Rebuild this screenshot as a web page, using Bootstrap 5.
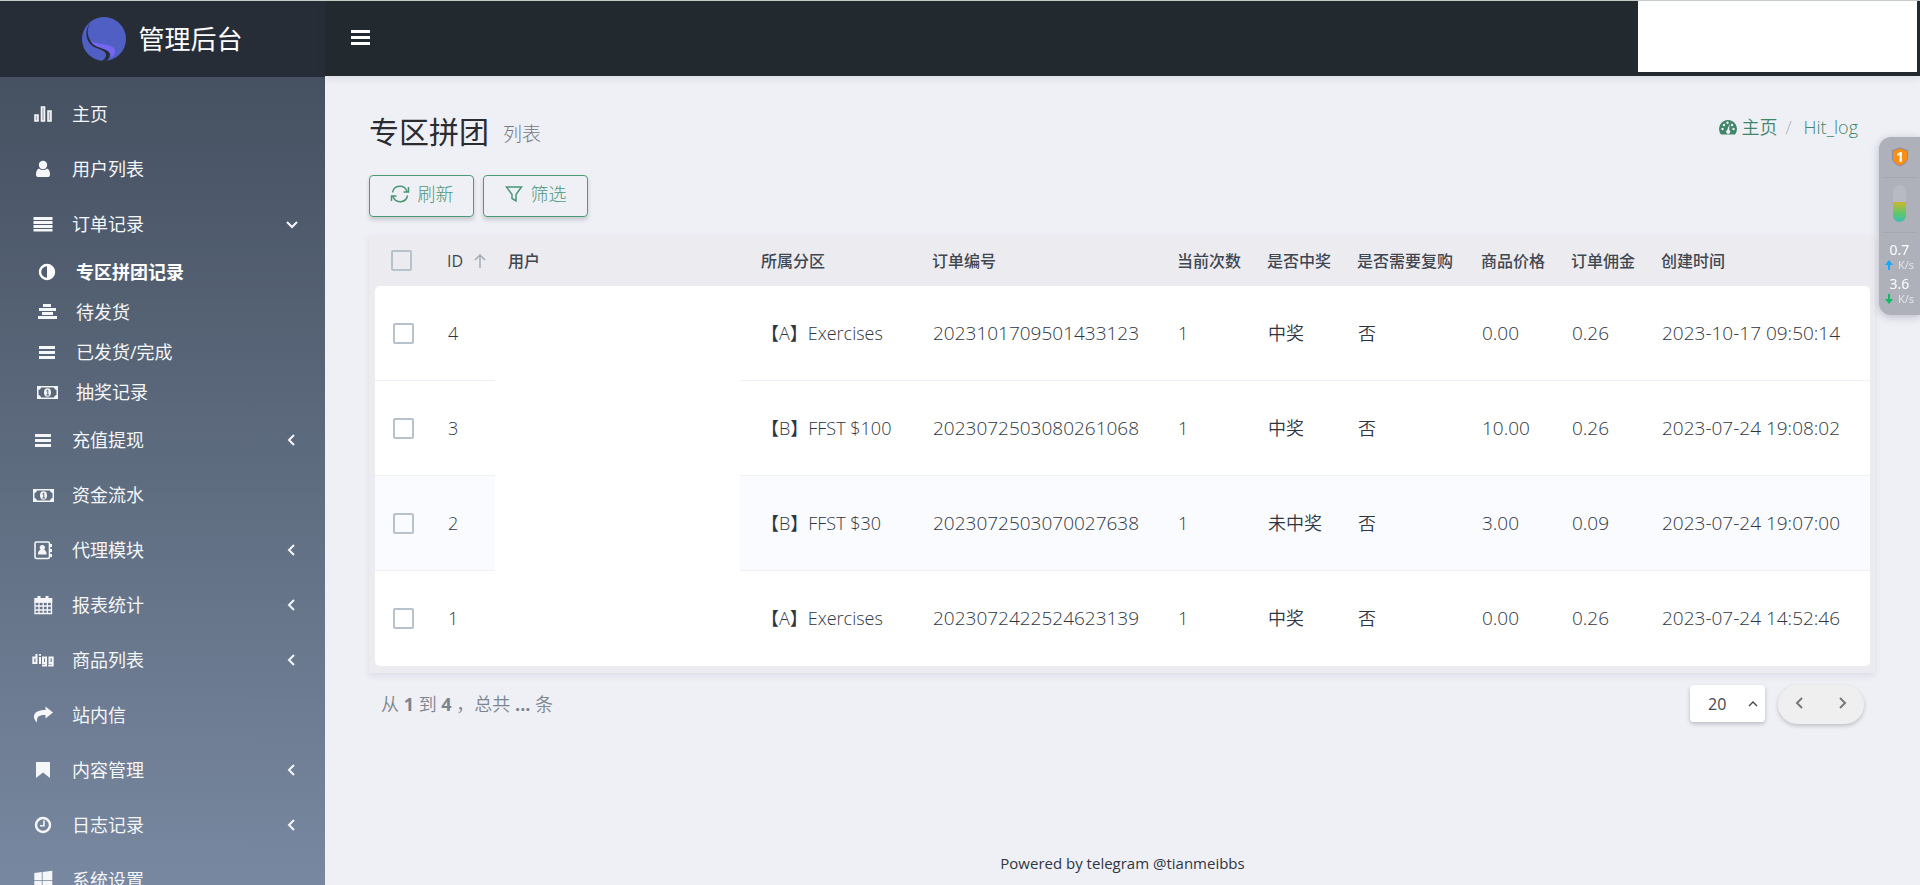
<!DOCTYPE html>
<html lang="zh-CN">
<head>
<meta charset="utf-8">
<meta name="viewport" content="width=device-width, initial-scale=1">
<title>管理后台</title>
<link href="https://cdn.jsdelivr.net/npm/bootstrap@5.3.0/dist/css/bootstrap.min.css" rel="stylesheet">
<style>
body{font-family:"Open Sans","Noto Sans CJK SC",sans-serif;font-weight:350;font-size:18px;line-height:24px;color:#30363f;background:#eff0f6}
svg{display:block;flex:none}
.shell{height:100vh;overflow:hidden;border-top:1px solid #c5ccc8}
.side{width:325px;flex:none;overflow:hidden;background:linear-gradient(#414c5b,#7888a0);color:#f4f6f8}
.brand-bar{height:76px;background:#272d37;color:#fff;font-size:26px;font-weight:400;gap:12px;text-decoration:none;flex:none}
.menu{padding-top:9px}
.menu a{display:flex;align-items:center;height:55px;flex:none;padding:0 27px 0 31px;gap:17px;color:#f4f6f8;text-decoration:none;font-weight:400}
.menu .sub{padding:1px 0 0}
.menu .sub a{height:40px;padding-left:35px;gap:17px}
.menu .sub a.on{font-weight:700;color:#fff}
.menu .ico{width:24px;height:20px;flex:none}
.menu .arrow{margin-left:auto}
.page{min-width:0}
.topbar{height:75px;background:#222a30;box-shadow:0 2px 8px rgba(60,60,90,.12);flex:none}
.userbox{width:279px;height:71px;background:#fff;margin-right:3px}
.content{padding:34px 45px 0 44px;min-width:0}
h1{font-size:30px;line-height:40px;font-weight:400;color:#2b2c30;gap:14px}
h1 small{font-size:19px;color:#77787e;font-weight:300;padding-top:4px}
.crumb{font-size:18px;padding:5px 17px 0 0;--bs-breadcrumb-divider-color:#b0b3ba}
.crumb a{color:#42866a;text-decoration:none}
.tools{gap:9px;margin-top:21px}
.tool{height:42px;width:105px;border:1px solid #4b9b78;border-radius:4px;color:#4c9776;font-size:18px;font-weight:300;padding:0 0 4px;gap:8px;box-shadow:0 3px 4px rgba(0,0,0,.16)}
.tool:hover{background:#4b9b78;color:#fff}
.sheet{background:#ececf0;padding:0 5px 7px 6px;margin-top:18px;box-shadow:0 3px 6px rgba(90,90,120,.12)}
.grid{table-layout:fixed;width:100%;border-collapse:separate;border-spacing:0}
.grid th{height:51px;padding:0 0 0 13px;font-size:16px;font-weight:500;color:#414750;white-space:nowrap}
.grid td{height:95px;padding:0 0 0 14px;background:#fff;border-bottom:1px solid #eff0f6;white-space:nowrap}
.grid tr.alt td{background:#fafbfe}
.grid tbody tr:last-child td{border-bottom-color:#fff}
.grid tr td.user{background:#fff;border-bottom-color:#fff}
.grid .num{font-size:19px}
.grid th.zone,.grid td.zone{padding-left:21px}
.grid .pick{padding-left:16px}
.grid td.pick{padding-left:18px}
.grid tbody tr:first-child td:first-child{border-top-left-radius:5px}
.grid tbody tr:first-child td:last-child{border-top-right-radius:5px}
.grid tbody tr:last-child td:first-child{border-bottom-left-radius:5px}
.grid tbody tr:last-child td:last-child{border-bottom-right-radius:5px}
.form-check-input.tick{display:block;width:21px;height:21px;margin:0;border:2px solid #b8c2cc;border-radius:2px;background-color:transparent}
.c-pick{width:59px}.c-id{width:61px}.c-zone{width:179px}.c-no{width:245px}.c-s{width:90px}.c-rb{width:124px}.c-date{width:222px}
.foot-row{padding:12px 11px 0 12px;color:#7c858e}
.foot-row b{font-weight:700}
.range{padding-top:7px}
.size-pick{width:75px;height:37px;border:0;border-radius:4px;margin-right:13px;padding:0 0 0 18px;font-size:16px;font-weight:400;color:#414750;background-color:#fff;background-position:right 6px center;background-size:12px;box-shadow:0 2px 4px rgba(0,0,0,.22);background-image:url("data:image/svg+xml,%3csvg xmlns='http://www.w3.org/2000/svg' viewBox='0 0 12 12'%3e%3cpath fill='none' stroke='%23414750' stroke-width='1.400' d='M2 8l4-4 4 4'/%3e%3c/svg%3e")}
.pager{width:86px;height:39px;border-radius:20px;background:#efeff0;box-shadow:0 2px 4px rgba(0,0,0,.2)}
.pager button{border:0;background:none;color:#77787c;padding:0 0 3px;width:43px}
.powered{font-size:15px;line-height:22px;padding-bottom:11px;font-weight:400}
.meter{position:fixed;right:0;top:137px;width:41px;height:178px;border-radius:12px 0 0 12px;background:#afb1ba;color:#fff;box-shadow:0 2px 8px rgba(60,60,90,.3);font-family:"Noto Sans",sans-serif;font-weight:400;font-size:14px;line-height:18px}
.meter .part{border-bottom:1px solid #a5a7b0;margin:0 4px}
.meter .shield{height:41px;padding-top:10px}
.meter .tube-box{height:55px;padding-top:7px;margin-bottom:8px}
.meter .tube{width:13px;height:37px;border-radius:7px;background:linear-gradient(#b8bac3 46%,#cdb62a 46%,#63c768 75%,#3bbcb5)}
.meter small{font-size:11px;line-height:16px;color:#e2e3e8;gap:5px;height:12px;margin-bottom:4px}
</style>
</head>
<body>
<svg class="d-none" aria-hidden="true">
  <symbol id="i-left" viewBox="0 0 12 12"><path d="M8 1 3 6l5 5" fill="none" stroke="currentColor" stroke-width="2"/></symbol>
  <symbol id="i-bars" viewBox="0 0 24 20"><path d="M4 4h16v3H4zM4 9h16v3H4zM4 14h16v3H4z" fill="currentColor"/></symbol>
  <symbol id="i-money" viewBox="0 0 24 20"><path fill="currentColor" fill-rule="evenodd" d="M2 4h21v13H2zM6 5.500a3 3 0 0 1-2.500 2.500v5A3 3 0 0 1 6 15.500h13a3 3 0 0 1 2.500-2.500V8A3 3 0 0 1 19 5.500z"/><ellipse cx="12.500" cy="10.500" rx="3.500" ry="4.200" fill="currentColor"/><path d="M11.300 9l1.500-1v5m-1.500 0h3" fill="none" stroke="#5b687b"/></symbol>
</svg>
<div class="shell d-flex">
  <aside class="side d-flex flex-column">
    <a href="#" class="brand-bar d-flex align-items-center justify-content-center">
      <svg width="44" height="44" viewBox="0 0 44 44"><circle cx="22" cy="22" r="22" fill="#4f5fc4"/><path d="M9 4C2 13 3 25 12 30c7 3 13 4 12 9-1 3-3 4-4 5l5-.3c4-4 4-9-1-12-6-3-12-3-16-9C4 16 6 9 9 4z" fill="#272d37"/><path d="M8 23c5 6 22 2 25 10 1 4-2 7-4 8 1-12-16-7-21-18z" fill="#7666f2"/></svg>
      <span>管理后台</span>
    </a>
    <nav class="menu d-flex flex-column">
      <a href="#"><svg class="ico" viewBox="0 0 24 20"><path d="M4 11h3v6H4zM10.500 3h3v14h-3zM17 7h3v10h-3z" fill="#a8afba" stroke="currentColor" stroke-width="1.600"/></svg>主页</a>
      <a href="#"><svg class="ico" viewBox="0 0 24 20"><circle cx="12" cy="6" r="4.200" fill="currentColor"/><path d="M8 9.500c2.500 2 5.500 2 8 0 2.500 1 3 3.500 3 6 0 2-1 2.500-2.500 2.500h-9C6 18 5 17.500 5 15.500c0-2.500.5-5 3-6z" fill="currentColor"/></svg>用户列表</a>
      <a href="#"><svg class="ico" viewBox="0 0 24 20"><path d="M2.500 3h19v3h-19zM2.500 7h19v3h-19zM2.500 11h19v3h-19zM2.500 15h19v2.500h-19z" fill="currentColor"/></svg>订单记录<svg class="arrow" width="12" height="12" viewBox="0 0 12 12"><path d="M1 4l5 5 5-5" fill="none" stroke="currentColor" stroke-width="2"/></svg></a>
      <div class="sub">
        <a href="#" class="on"><svg class="ico" viewBox="0 0 24 20"><circle cx="12" cy="10" r="7" fill="none" stroke="currentColor" stroke-width="2.400"/><path d="M12 3a7 7 0 0 1 0 14z" fill="currentColor"/></svg>专区拼团记录</a>
        <a href="#"><svg class="ico" viewBox="0 0 24 20"><path d="M8 2h8v3H8zM4 6h17v3H4zM7 10h11v3H7zM3 14h19v3H3z" fill="currentColor"/></svg>待发货</a>
        <a href="#"><svg class="ico"><use href="#i-bars"/></svg>已发货/完成</a>
        <a href="#"><svg class="ico"><use href="#i-money"/></svg>抽奖记录</a>
      </div>
      <a href="#"><svg class="ico"><use href="#i-bars"/></svg>充值提现<svg class="arrow" width="12" height="12"><use href="#i-left"/></svg></a>
      <a href="#"><svg class="ico"><use href="#i-money"/></svg>资金流水</a>
      <a href="#"><svg class="ico" viewBox="0 0 24 20"><rect x="4" y="2" width="14.500" height="16.500" rx="1.500" fill="none" stroke="currentColor" stroke-width="1.600"/><circle cx="11.300" cy="7.500" r="2.600" fill="currentColor"/><path d="M7 14.500c0-4 2-5 4.300-5s4.300 1 4.300 5zM19 4h2v3h-2zM19 9h2v3h-2zM19 14h2v3h-2z" fill="currentColor"/></svg>代理模块<svg class="arrow" width="12" height="12"><use href="#i-left"/></svg></a>
      <a href="#"><svg class="ico" viewBox="0 0 24 20"><path d="M4 7h16.500v11.500H4zM8 7v11.500M12.200 7v11.500M16.400 7v11.500M4 11h16.500M4 15h16.500" fill="none" stroke="currentColor" stroke-width="1.300"/><path d="M3.300 3h18v4.500h-18zM6.500 1h3v4h-3zM14.500 1h3v4h-3z" fill="currentColor"/></svg>报表统计<svg class="arrow" width="12" height="12"><use href="#i-left"/></svg></a>
      <a href="#"><svg class="ico" viewBox="0 0 24 20"><path d="M5.500 4v9H2.300V7.500h3.200M9 7v7M9 4v1.800M12 7.500h3v5.500h-3zM15 8v7.500h-4M18.500 7.500h3.200v5.500h-3.200zM21.700 8v7.500h-4.500" fill="none" stroke="currentColor" stroke-width="2"/></svg>商品列表<svg class="arrow" width="12" height="12"><use href="#i-left"/></svg></a>
      <a href="#"><svg class="ico" viewBox="0 0 24 20"><path d="M14.500 1.500l7.500 6-7.500 6V10c-6 0-9 1-8.500 7.500C.500 12 2 5 14.500 5z" fill="currentColor"/></svg>站内信</a>
      <a href="#"><svg class="ico" viewBox="0 0 24 20"><path d="M5 2h14v16l-7-5.500L5 18z" fill="currentColor"/></svg>内容管理<svg class="arrow" width="12" height="12"><use href="#i-left"/></svg></a>
      <a href="#"><svg class="ico" viewBox="0 0 24 20"><circle cx="12" cy="10" r="7" fill="none" stroke="currentColor" stroke-width="2.500"/><path d="M13 5.500v5.300H9" fill="none" stroke="currentColor" stroke-width="1.600"/></svg>日志记录<svg class="arrow" width="12" height="12"><use href="#i-left"/></svg></a>
      <a href="#"><svg class="ico" viewBox="0 0 24 20"><path d="M3.300 3l7.500-1v8H3.300zM11.600 2l9.700-1.200V10h-9.700zM3.300 10.800h7.500v8l-7.500-1zM11.600 10.800h9.700V20l-9.700-1.200z" fill="currentColor"/></svg>系统设置</a>
    </nav>
  </aside>
  <div class="page flex-grow-1 d-flex flex-column">
    <header class="topbar d-flex">
      <button class="btn p-0 border-0 ms-4 align-self-center" aria-label="菜单"><svg width="22" height="22" viewBox="0 0 22 22"><path d="M2 2h19v3H2zM2 8h19v3H2zM2 14h19v3H2z" fill="#fff"/></svg></button>
      <div class="userbox ms-auto"></div>
    </header>
    <main class="content flex-grow-1">
      <div class="d-flex justify-content-between">
        <h1 class="d-flex align-items-center mb-0">专区拼团<small>列表</small></h1>
        <nav aria-label="breadcrumb"><ol class="breadcrumb crumb mb-0">
          <li class="breadcrumb-item"><a href="#" class="d-flex align-items-center gap-1"><svg width="18" height="16" viewBox="0 0 18 16"><path d="M9 1a9 9 0 0 1 8 13l-1 1.500H2L1 14A9 9 0 0 1 9 1z" fill="#42866a"/><path d="M8.200 11 10.500 5l-.3 6a2 2 0 1 1-2 0z" fill="#eff0f6"/><circle cx="3.500" cy="10" r="1.200" fill="#eff0f6"/><circle cx="5" cy="6" r="1.200" fill="#eff0f6"/><circle cx="8.500" cy="3.800" r="1.200" fill="#eff0f6"/><circle cx="13" cy="6" r="1.200" fill="#eff0f6"/><circle cx="14.500" cy="10" r="1.200" fill="#eff0f6"/></svg>主页</a></li>
          <li class="breadcrumb-item"><a href="#" class="ps-1">Hit_log</a></li>
        </ol></nav>
      </div>
      <div class="tools d-flex">
        <button class="btn tool d-flex align-items-center justify-content-center"><svg width="20" height="18" viewBox="0 0 20 18" fill="none" stroke="currentColor" stroke-width="1.500"><path d="M2.500 7.500A7.500 7.500 0 0 1 17 6.500M18.500 2v5h-5M17.500 10.500A7.500 7.500 0 0 1 3 11.500M1.500 16v-5h5"/></svg>刷新</button>
        <button class="btn tool d-flex align-items-center justify-content-center"><svg width="18" height="18" viewBox="0 0 18 18" fill="none" stroke="currentColor" stroke-width="1.500"><path d="M1.500 2h15L11 9.500V16l-4-2.500v-4z"/></svg>筛选</button>
      </div>
      <div class="sheet">
        <table class="grid">
          <colgroup><col class="c-pick"><col class="c-id"><col><col class="c-zone"><col class="c-no"><col class="c-s"><col class="c-s"><col class="c-rb"><col class="c-s"><col class="c-s"><col class="c-date"></colgroup>
          <thead><tr>
            <th class="pick"><input type="checkbox" class="form-check-input tick" aria-label="全选"></th>
            <th><span class="d-flex align-items-center gap-2">ID <svg width="16" height="16" viewBox="0 0 16 16" fill="none" stroke="#a4adb6" stroke-width="1.500"><path d="M9 15V2M4 7l5-5 5 5"/></svg></span></th>
            <th>用户</th><th class="zone">所属分区</th><th>订单编号</th><th>当前次数</th><th>是否中奖</th><th>是否需要复购</th><th>商品价格</th><th>订单佣金</th><th>创建时间</th>
          </tr></thead>
          <tbody>
            <tr><td class="pick"><input type="checkbox" class="form-check-input tick" aria-label="4"></td><td>4</td><td class="user"></td><td class="zone">【A】Exercises</td><td class="num">2023101709501433123</td><td>1</td><td>中奖</td><td>否</td><td class="num">0.00</td><td class="num">0.26</td><td class="num">2023-10-17 09:50:14</td></tr>
            <tr><td class="pick"><input type="checkbox" class="form-check-input tick" aria-label="3"></td><td>3</td><td class="user"></td><td class="zone">【B】FFST $100</td><td class="num">2023072503080261068</td><td>1</td><td>中奖</td><td>否</td><td class="num">10.00</td><td class="num">0.26</td><td class="num">2023-07-24 19:08:02</td></tr>
            <tr class="alt"><td class="pick"><input type="checkbox" class="form-check-input tick" aria-label="2"></td><td>2</td><td class="user"></td><td class="zone">【B】FFST $30</td><td class="num">2023072503070027638</td><td>1</td><td>未中奖</td><td>否</td><td class="num">3.00</td><td class="num">0.09</td><td class="num">2023-07-24 19:07:00</td></tr>
            <tr><td class="pick"><input type="checkbox" class="form-check-input tick" aria-label="1"></td><td>1</td><td class="user"></td><td class="zone">【A】Exercises</td><td class="num">2023072422524623139</td><td>1</td><td>中奖</td><td>否</td><td class="num">0.00</td><td class="num">0.26</td><td class="num">2023-07-24 14:52:46</td></tr>
          </tbody>
        </table>
      </div>
      <div class="foot-row d-flex">
        <div class="range">从 <b>1</b> 到 <b>4</b> ，总共 <b>...</b> 条</div>
        <select class="form-select size-pick ms-auto" aria-label="每页条数"><option>20</option><option>50</option></select>
        <div class="pager d-flex">
          <button aria-label="上一页"><svg class="mx-auto" width="12" height="12"><use href="#i-left"/></svg></button>
          <button aria-label="下一页"><svg class="mx-auto" width="12" height="12" viewBox="0 0 12 12"><path d="M3 1l5 5-5 5" fill="none" stroke="currentColor" stroke-width="2"/></svg></button>
        </div>
      </div>
    </main>
    <footer class="powered text-center">Powered by telegram @tianmeibbs</footer>
  </div>
</div>
<div class="meter d-flex flex-column">
  <div class="part shield d-flex justify-content-center"><svg width="18" height="20" viewBox="0 0 18 20"><path d="M9 1l7.500 2.500V11c0 4-4 6.500-7.500 8-3.500-1.500-7.500-4-7.500-8V3.500z" fill="#fb8f14" stroke="#8588ad"/><text x="9" y="15" font-size="14" font-weight="700" fill="#fff" text-anchor="middle">1</text></svg></div>
  <div class="part tube-box d-flex justify-content-center"><div class="tube"></div></div>
  <div class="text-center">0.7<small class="d-flex align-items-center justify-content-center"><svg width="8" height="10" viewBox="0 0 8 10"><path d="M4 0l4 5H5v5H3V5H0z" fill="#17a8ff"/></svg>K/s</small></div>
  <div class="text-center">3.6<small class="d-flex align-items-center justify-content-center"><svg width="8" height="10" viewBox="0 0 8 10"><path d="M4 10l4-5H5V0H3v5H0z" fill="#0dbb62"/></svg>K/s</small></div>
</div>
<script src="https://cdn.jsdelivr.net/npm/bootstrap@5.3.0/dist/js/bootstrap.bundle.min.js"></script>
</body>
</html>
